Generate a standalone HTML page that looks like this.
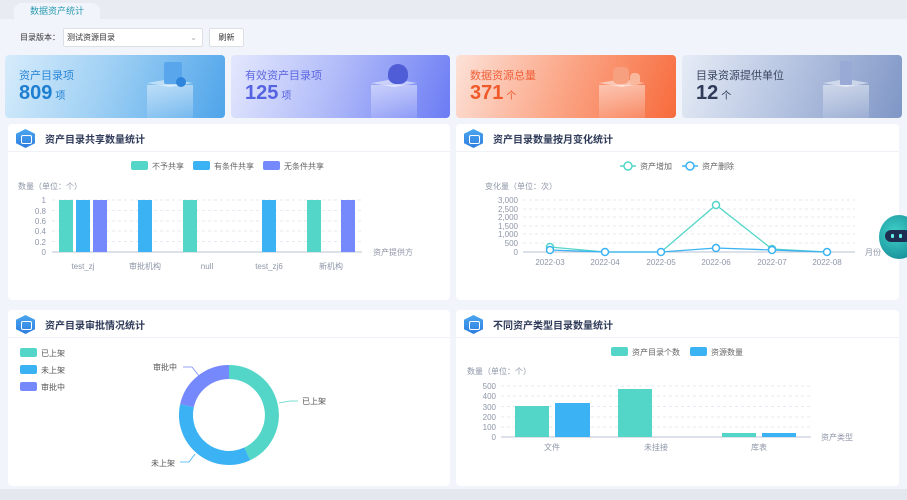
<!DOCTYPE html>
<html><head><meta charset="utf-8"><style>
*{margin:0;padding:0;box-sizing:border-box}
body{width:907px;height:500px;overflow:hidden;background:#f1f4fb;font-family:"Liberation Sans","Noto Sans CJK SC",sans-serif;position:relative;color:#333}
.abs{position:absolute}
.top{left:0;top:0;width:907px;height:19px;background:#e8ebf2}
.tab{left:14px;top:3px;width:86px;height:17px;background:#f1f4fb;border-radius:8px 8px 0 0;font-size:9px;color:#2a9bb0;text-align:center;line-height:16px}
.card{top:55px;height:63px;border-radius:4px;overflow:hidden}
.card .t{position:absolute;left:14px;top:12px;font-size:11px}
.card .n{position:absolute;left:14px;top:27px;font-size:20px;font-weight:bold}
.card .n span{font-size:10px;font-weight:normal;margin-left:3px}
.box{position:absolute;left:142px;top:30px;width:46px;height:33px;background:linear-gradient(rgba(255,255,255,0.45),rgba(255,255,255,0.12))}
.boxtop{position:absolute;left:142px;top:24px;width:46px;height:8px;background:rgba(255,255,255,0.5);clip-path:polygon(0 50%,50% 0,100% 50%,50% 100%)}
.panel{background:#fff;border-radius:4px}
.ph{position:absolute;left:0;top:0;right:0;height:28px;border-bottom:1px solid #eef1f6}
.ph b{position:absolute;left:37px;top:7px;font-size:10px;color:#2f3b59}
.hex{position:absolute;left:8px;top:5px;width:19px;height:19px;background:linear-gradient(#4aa7f0,#2f7de0);clip-path:polygon(50% 0,100% 25%,100% 75%,50% 100%,0 75%,0 25%)}
.hex:after{content:"";position:absolute;left:5px;top:6px;width:9px;height:7px;border:1.5px solid #fff;border-radius:2px}
svg text{font-family:"Liberation Sans","Noto Sans CJK SC",sans-serif}
</style></head><body>
<div class="abs top"></div>
<div class="abs tab">数据资产统计</div>
<div class="abs" style="left:20px;top:32px;font-size:8px;color:#333">目录版本：</div>
<div class="abs" style="left:63px;top:28px;width:140px;height:19px;background:#fff;border:1px solid #dcdfe6;border-radius:2px;font-size:8px;line-height:17px;padding-left:3px">测试资源目录<span style="position:absolute;right:5px;color:#aaa">⌄</span></div>
<div class="abs" style="left:209px;top:28px;width:35px;height:19px;background:#fff;border:1px solid #dcdfe6;border-radius:2px;font-size:8px;line-height:17px;text-align:center">刷新</div>

<div class="abs card" style="left:5px;width:220px;background:linear-gradient(110deg,#d7ecfb 0%,#9fd0f4 45%,#4ea4ea 100%)"><div class="t" style="color:#2a86d6">资产目录项</div><div class="n" style="color:#1e7fd2">809<span>项</span></div>
<div class="box"></div><div class="boxtop"></div><div class="abs" style="left:159px;top:7px;width:18px;height:22px;background:#5aa6ec;border-radius:2px"></div><div class="abs" style="left:171px;top:22px;width:10px;height:10px;background:#2f84db;border-radius:50%"></div></div>
<div class="abs card" style="left:231px;width:219px;background:linear-gradient(110deg,#e4e8fd 0%,#b3bdf9 45%,#6b7cf4 100%)"><div class="t" style="color:#5b66e0">有效资产目录项</div><div class="n" style="color:#5663e0">125<span>项</span></div>
<div class="box" style="left:140px"></div><div class="boxtop" style="left:140px"></div><div class="abs" style="left:157px;top:9px;width:20px;height:20px;background:#4f5ed6;border-radius:50% 50% 40% 40%"></div></div>
<div class="abs card" style="left:456px;width:220px;background:linear-gradient(110deg,#fde2d8 0%,#fbaa8c 45%,#f76b3c 100%)"><div class="t" style="color:#f0603a">数据资源总量</div><div class="n" style="color:#f05a2b">371<span>个</span></div>
<div class="box" style="left:143px"></div><div class="boxtop" style="left:143px"></div><div class="abs" style="left:157px;top:12px;width:16px;height:17px;background:#f7a080;border-radius:5px"></div><div class="abs" style="left:174px;top:18px;width:10px;height:12px;background:#f9b79c;border-radius:4px"></div></div>
<div class="abs card" style="left:682px;width:220px;background:linear-gradient(110deg,#e6ecf6 0%,#b8c6e2 45%,#7f96c6 100%)"><div class="t" style="color:#3a4560">目录资源提供单位</div><div class="n" style="color:#2f3b59">12<span>个</span></div>
<div class="box" style="left:141px"></div><div class="boxtop" style="left:141px"></div><div class="abs" style="left:158px;top:6px;width:12px;height:24px;background:#9aaad6;border-radius:1px"></div></div>

<!-- panel 1 -->
<div class="abs panel" style="left:8px;top:124px;width:442px;height:176px"><div class="ph"><div class="hex"></div><b>资产目录共享数量统计</b></div></div>
<svg class="abs" style="left:0;top:124px" width="450" height="176">
<g font-size="8" fill="#666">
<rect x="131" y="37" width="17" height="9" rx="2" fill="#53d6c8"/><text x="152" y="45">不予共享</text>
<rect x="193" y="37" width="17" height="9" rx="2" fill="#3bb2f3"/><text x="214" y="45">有条件共享</text>
<rect x="263" y="37" width="17" height="9" rx="2" fill="#7589fd"/><text x="284" y="45">无条件共享</text>
</g>
<g font-size="8" fill="#8e96a8"><text x="18" y="65">数量（单位：个）</text>
<g text-anchor="end"><text x="46" y="79">1</text><text x="46" y="90">0.8</text><text x="46" y="100">0.6</text><text x="46" y="110">0.4</text><text x="46" y="121">0.2</text><text x="46" y="131">0</text></g>
<text x="373" y="131">资产提供方</text>
<g text-anchor="middle"><text x="83" y="145">test_zj</text><text x="145" y="145">审批机构</text><text x="207" y="145">null</text><text x="269" y="145">test_zj6</text><text x="331" y="145">新机构</text></g></g>
<g stroke="#e6eaf2" stroke-dasharray="3,3"><line x1="52" x2="362" y1="76" y2="76"/><line x1="52" x2="362" y1="86.5" y2="86.5"/><line x1="52" x2="362" y1="97" y2="97"/><line x1="52" x2="362" y1="107" y2="107"/><line x1="52" x2="362" y1="117.5" y2="117.5"/></g>
<line x1="52" x2="362" y1="128" y2="128" stroke="#b8c0d0"/>
<g fill="#53d6c8"><rect x="59" y="76" width="14" height="52"/><rect x="183" y="76" width="14" height="52"/><rect x="307" y="76" width="14" height="52"/></g>
<g fill="#3bb2f3"><rect x="76" y="76" width="14" height="52"/><rect x="138" y="76" width="14" height="52"/><rect x="262" y="76" width="14" height="52"/></g>
<g fill="#7589fd"><rect x="93" y="76" width="14" height="52"/><rect x="341" y="76" width="14" height="52"/></g>
</svg>

<!-- panel 2 -->
<div class="abs panel" style="left:456px;top:124px;width:443px;height:176px"><div class="ph"><div class="hex"></div><b>资产目录数量按月变化统计</b></div></div>
<svg class="abs" style="left:450px;top:124px" width="457" height="176">
<g font-size="8" fill="#666">
<line x1="170" x2="186" y1="42" y2="42" stroke="#53d6c8" stroke-width="1.5"/><circle cx="178" cy="42" r="4" fill="#fff" stroke="#53d6c8" stroke-width="1.5"/><text x="190" y="45">资产增加</text>
<line x1="232" x2="248" y1="42" y2="42" stroke="#3bb2f3" stroke-width="1.5"/><circle cx="240" cy="42" r="4" fill="#fff" stroke="#3bb2f3" stroke-width="1.5"/><text x="252" y="45">资产删除</text></g>
<g font-size="8" fill="#8e96a8"><text x="35" y="65">变化量（单位：次）</text>
<g text-anchor="end"><text x="68" y="79">3,000</text><text x="68" y="88">2,500</text><text x="68" y="96">2,000</text><text x="68" y="105">1,500</text><text x="68" y="113">1,000</text><text x="68" y="122">500</text><text x="68" y="131">0</text></g>
<text x="415" y="131">月份</text>
<g text-anchor="middle"><text x="100" y="141">2022-03</text><text x="155" y="141">2022-04</text><text x="211" y="141">2022-05</text><text x="266" y="141">2022-06</text><text x="322" y="141">2022-07</text><text x="377" y="141">2022-08</text></g></g>
<g stroke="#e6eaf2" stroke-dasharray="3,3"><line x1="73" x2="405" y1="76" y2="76"/><line x1="73" x2="405" y1="85" y2="85"/><line x1="73" x2="405" y1="93" y2="93"/><line x1="73" x2="405" y1="102" y2="102"/><line x1="73" x2="405" y1="110" y2="110"/><line x1="73" x2="405" y1="119" y2="119"/></g>
<line x1="73" x2="405" y1="128" y2="128" stroke="#b8c0d0"/>
<polyline points="100,123 155,128 211,128 266,81 322,125 377,128" fill="none" stroke="#53d6c8" stroke-width="1.3"/>
<polyline points="100,126 155,128 211,128 266,124 322,126 377,128" fill="none" stroke="#3bb2f3" stroke-width="1.3"/>
<g fill="#fff" stroke-width="1.5" stroke="#53d6c8"><circle cx="100" cy="123" r="3.5"/><circle cx="266" cy="81" r="3.5"/><circle cx="322" cy="125" r="3.5"/></g>
<g fill="#fff" stroke-width="1.5" stroke="#3bb2f3"><circle cx="100" cy="126" r="3.5"/><circle cx="155" cy="128" r="3.5"/><circle cx="211" cy="128" r="3.5"/><circle cx="266" cy="124" r="3.5"/><circle cx="322" cy="126" r="3.5"/><circle cx="377" cy="128" r="3.5"/></g>
</svg>

<!-- robot -->
<div class="abs" style="left:879px;top:215px;width:40px;height:44px;border-radius:50%;background:radial-gradient(circle at 40% 40%,#3fd1c9,#0f7f8e)"><div style="position:absolute;left:6px;top:15px;width:26px;height:12px;background:#1e2d50;border-radius:6px"></div><div style="position:absolute;left:12px;top:19px;width:3px;height:4px;background:#6ee;border-radius:1px"></div><div style="position:absolute;left:20px;top:19px;width:3px;height:4px;background:#6ee;border-radius:1px"></div></div>

<!-- panel 3 -->
<div class="abs panel" style="left:8px;top:310px;width:442px;height:176px"><div class="ph"><div class="hex"></div><b>资产目录审批情况统计</b></div></div>
<svg class="abs" style="left:0;top:300px" width="450" height="190">
<g font-size="8" fill="#555">
<rect x="20" y="48" width="17" height="9" rx="2" fill="#53d6c8"/><text x="41" y="56">已上架</text>
<rect x="20" y="65" width="17" height="9" rx="2" fill="#3bb2f3"/><text x="41" y="73">未上架</text>
<rect x="20" y="82" width="17" height="9" rx="2" fill="#7589fd"/><text x="41" y="90">审批中</text>
<text x="302" y="104">已上架</text><text x="151" y="166">未上架</text><text x="153" y="70">审批中</text></g>
<g fill="none" stroke-width="14">
<path d="M229,72 A43,43 0 0 1 247.2,153.9" stroke="#53d6c8"/>
<path d="M247.2,153.9 A43,43 0 0 1 187,105.6" stroke="#3bb2f3"/>
<path d="M187,105.6 A43,43 0 0 1 229,72" stroke="#7589fd"/>
</g>
<g fill="none" stroke-width="0.8"><polyline points="279,103 290,101 298,101" stroke="#53d6c8"/><polyline points="195,154 189,162 180,162" stroke="#3bb2f3"/><polyline points="199,76 192,67 183,67" stroke="#7589fd"/></g>
</svg>

<!-- panel 4 -->
<div class="abs panel" style="left:456px;top:310px;width:443px;height:176px"><div class="ph"><div class="hex"></div><b>不同资产类型目录数量统计</b></div></div>
<svg class="abs" style="left:450px;top:300px" width="457" height="190">
<g font-size="8" fill="#666">
<rect x="161" y="47" width="17" height="9" rx="2" fill="#53d6c8"/><text x="182" y="55">资产目录个数</text>
<rect x="240" y="47" width="17" height="9" rx="2" fill="#3bb2f3"/><text x="261" y="55">资源数量</text></g>
<g font-size="8" fill="#8e96a8"><text x="17" y="74">数量（单位：个）</text>
<g text-anchor="end"><text x="46" y="89">500</text><text x="46" y="99">400</text><text x="46" y="110">300</text><text x="46" y="120">200</text><text x="46" y="130">100</text><text x="46" y="140">0</text></g>
<text x="371" y="140">资产类型</text>
<g text-anchor="middle"><text x="102" y="150">文件</text><text x="206" y="150">未挂接</text><text x="309" y="150">库表</text></g></g>
<g stroke="#e6eaf2" stroke-dasharray="3,3"><line x1="51" x2="361" y1="86" y2="86"/><line x1="51" x2="361" y1="96" y2="96"/><line x1="51" x2="361" y1="106.5" y2="106.5"/><line x1="51" x2="361" y1="117" y2="117"/><line x1="51" x2="361" y1="127" y2="127"/></g>
<line x1="51" x2="361" y1="137" y2="137" stroke="#b8c0d0"/>
<g fill="#53d6c8"><rect x="65" y="106" width="34" height="31"/><rect x="168" y="89" width="34" height="48"/><rect x="272" y="133" width="34" height="4"/></g>
<g fill="#3bb2f3"><rect x="105" y="103" width="35" height="34"/><rect x="312" y="133" width="34" height="4"/></g>
</svg>
<div class="abs" style="left:0;top:489px;width:907px;height:11px;background:#e4e7ee"></div>
</body></html>
